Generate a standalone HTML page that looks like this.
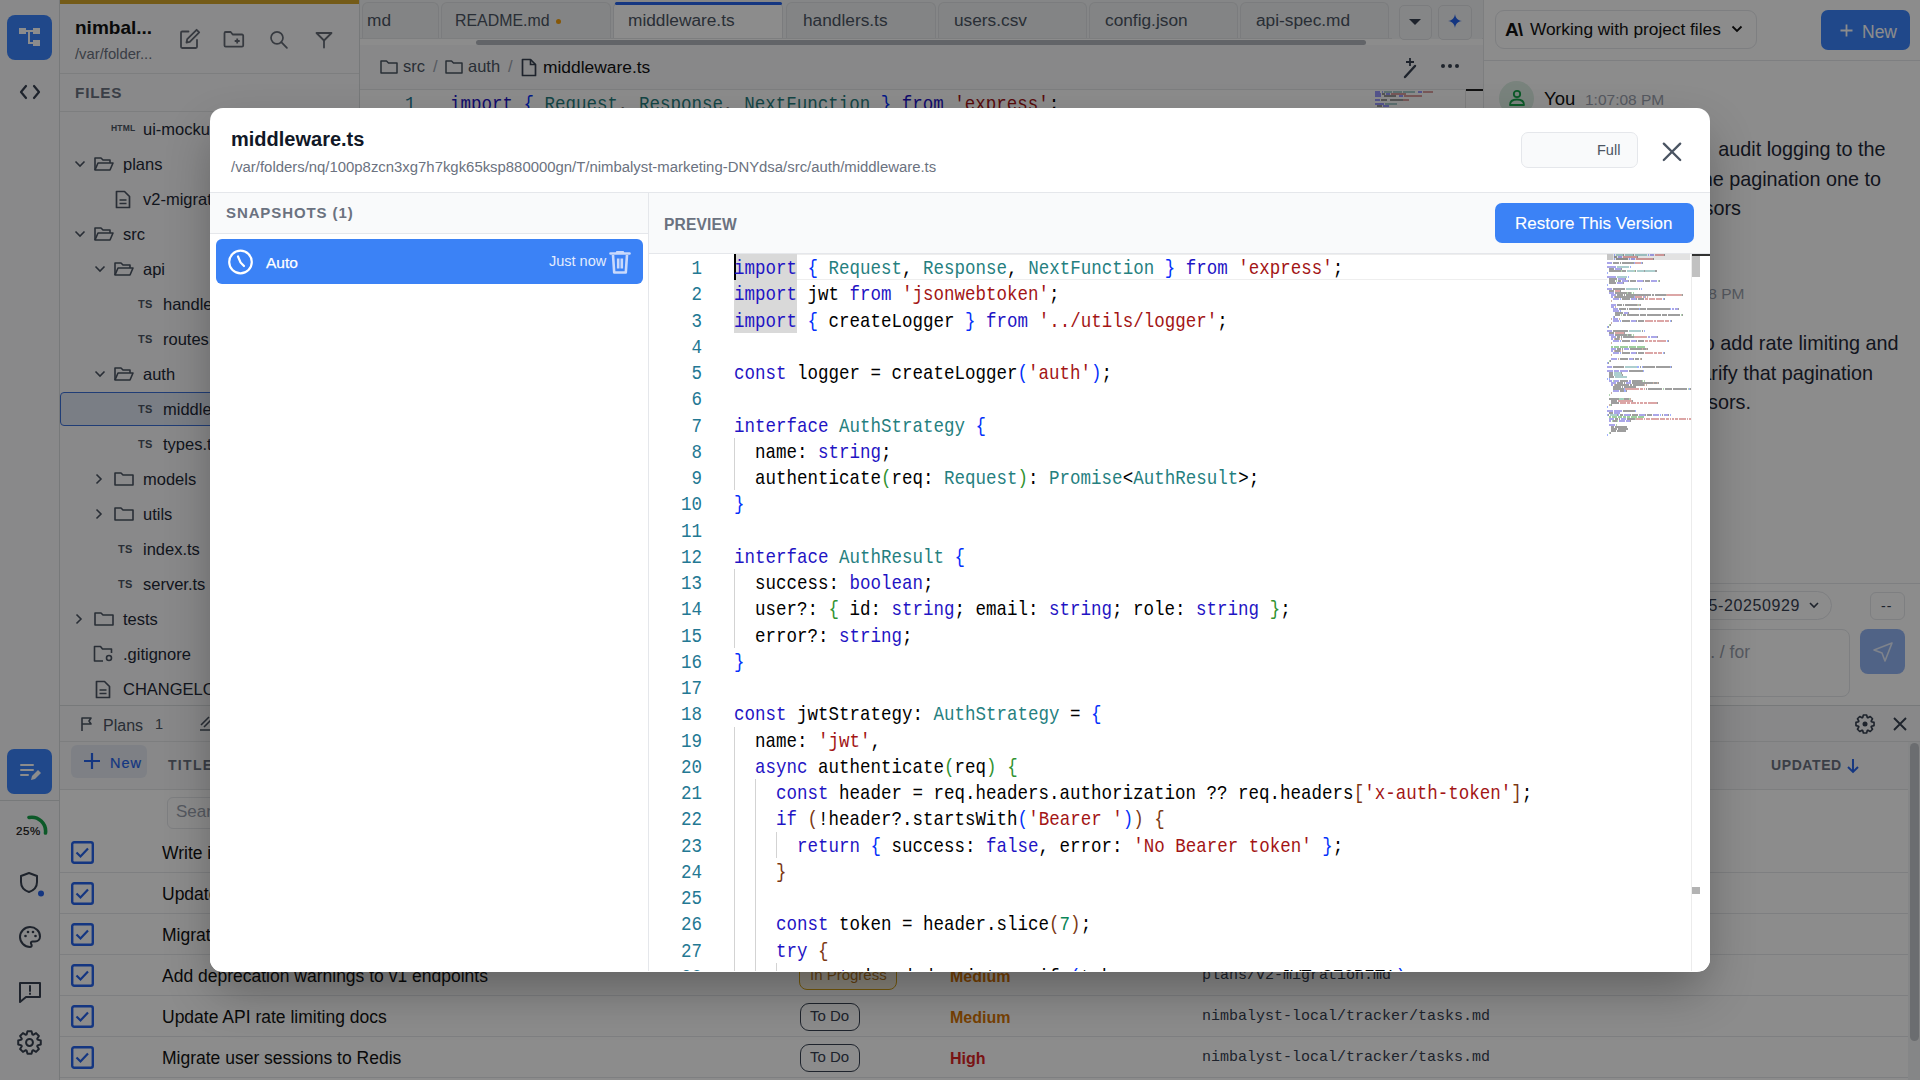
<!DOCTYPE html>
<html><head><meta charset="utf-8"><style>
*{margin:0;padding:0}
html,body{width:1920px;height:1080px;overflow:hidden;background:#fff}
.abs{position:absolute}
.txt{font-family:"Liberation Sans",sans-serif;line-height:1.2;white-space:nowrap}
.mono{font-family:"Liberation Mono",monospace;line-height:1.2;white-space:pre}
.ln{left:0;width:53px;text-align:right;font-size:17.5px;line-height:26.25px;color:#237893;transform:scaleY(1.15);transform-origin:0 17px}
.cl{font-size:17.5px;line-height:26.25px;color:#000;transform:scaleY(1.15);transform-origin:0 17px}
.mm{font-size:10px;line-height:12.6px;transform:scale(0.1667);transform-origin:0 0;font-weight:bold;color:#000}
</style></head>
<body>
<div class="abs" style="left:0;top:0;width:59px;height:1080px;background:#fafafb;border-right:1px solid #d9dcdf"></div>
<div class="abs" style="left:7px;top:15px;width:45px;height:45px;border-radius:8px;background:#3b84fc"></div>
<svg class="abs" style="left:17px;top:25px" width="26" height="26" viewBox="0 0 26 26"><rect x="2" y="3" width="7" height="6" fill="#fff"/><rect x="16" y="3" width="7" height="6" fill="#fff"/><rect x="16" y="15" width="7" height="6" fill="#fff"/><path d="M9 6h7M12 6v12h4" stroke="#fff" stroke-width="2" fill="none"/></svg>
<svg class="abs" style="left:19px;top:83px" width="22" height="18" viewBox="0 0 22 18"><path d="M7 3L2 9l5 6M15 3l5 6-5 6" stroke="#374151" stroke-width="2.2" fill="none" stroke-linecap="round" stroke-linejoin="round"/></svg>
<div class="abs" style="left:7px;top:749px;width:45px;height:45px;border-radius:7px;background:#3b84fc"></div>
<svg class="abs" style="left:18px;top:760px" width="24" height="24" viewBox="0 0 24 24"><path d="M3 5h12M3 10h12M3 15h7" stroke="#fff" stroke-width="2" stroke-linecap="round"/><path d="M13 20l1-4 6-6 3 3-6 6z" fill="#fff"/></svg>
<div class="abs" style="left:0;top:800px;width:59px;height:1px;background:#d9dcdf"></div>
<svg class="abs" style="left:14px;top:813px" width="34" height="30" viewBox="0 0 34 30"><path d="M15 4.5 A14 14 0 0 1 31.5 20" stroke="#16a34a" stroke-width="3.6" fill="none" stroke-linecap="round"/></svg>
<div class="abs txt" style="left:16px;top:825px;font-size:11.5px;color:#111;letter-spacing:0.6px;-webkit-text-stroke:0.2px #111">25%</div>
<svg class="abs" style="left:18px;top:871px" width="26" height="26" viewBox="0 0 26 26"><path d="M11 2l8 3v6c0 5-3.5 8.5-8 10-4.5-1.5-8-5-8-10V5z" stroke="#374151" stroke-width="2" fill="none" stroke-linejoin="round"/><circle cx="23" cy="22.5" r="3" fill="#2563eb"/></svg>
<svg class="abs" style="left:18px;top:925px" width="24" height="24" viewBox="0 0 24 24"><path d="M12 2C6.5 2 2 6.5 2 12s4.5 10 10 10c1 0 1.7-.8 1.7-1.7 0-.4-.2-.8-.4-1.1-.3-.3-.4-.7-.4-1.1 0-.9.8-1.7 1.7-1.7H17c3 0 5-2.2 5-5C22 6 17.5 2 12 2z" stroke="#374151" stroke-width="2" fill="none"/><circle cx="7.5" cy="11" r="1.3" fill="#374151"/><circle cx="10" cy="7" r="1.3" fill="#374151"/><circle cx="15" cy="7" r="1.3" fill="#374151"/><circle cx="17.5" cy="11" r="1.3" fill="#374151"/></svg>
<svg class="abs" style="left:18px;top:980px" width="24" height="24" viewBox="0 0 24 24"><path d="M2 3h20v14H8l-6 5z" stroke="#374151" stroke-width="2" fill="none" stroke-linejoin="round"/><path d="M12 6v5M12 13.5v.5" stroke="#374151" stroke-width="2" stroke-linecap="round"/></svg>
<svg class="abs" style="left:17px;top:1030px" width="25" height="25" viewBox="0 0 24 24"><path d="M19.72 9.22 L22.83 10.07 L22.83 13.93 L19.72 14.78 L19.42 15.49 L21.02 18.29 L18.29 21.02 L15.49 19.42 L14.78 19.72 L13.93 22.83 L10.07 22.83 L9.22 19.72 L8.51 19.42 L5.71 21.02 L2.98 18.29 L4.58 15.49 L4.28 14.78 L1.17 13.93 L1.17 10.07 L4.28 9.22 L4.58 8.51 L2.98 5.71 L5.71 2.98 L8.51 4.58 L9.22 4.28 L10.07 1.17 L13.93 1.17 L14.78 4.28 L15.49 4.58 L18.29 2.98 L21.02 5.71 L19.42 8.51Z" stroke="#374151" stroke-width="1.9" fill="none" stroke-linejoin="round"/><circle cx="12" cy="12" r="3.3" stroke="#374151" stroke-width="1.9" fill="none"/></svg>
<div class="abs" style="left:60px;top:0;width:299px;height:705px;background:#fafafb;border-right:1px solid #d9dcdf"></div>
<div class="abs" style="left:60px;top:0;width:299px;height:4px;background:#d4a72c"></div>
<div class="abs txt" style="left:75px;top:16.5px;font-size:19px;font-weight:bold;color:#111">nimbal...</div>
<div class="abs txt" style="left:75px;top:45.5px;font-size:14.8px;color:#6b7280">/var/folder...</div>
<svg class="abs" style="left:179px;top:28px" width="22" height="22" viewBox="0 0 22 22"><path d="M9.5 3.5H3.2a1.2 1.2 0 0 0-1.2 1.2v14.1a1.2 1.2 0 0 0 1.2 1.2h13.6a1.2 1.2 0 0 0 1.2-1.2V12" stroke="#646b76" stroke-width="1.8" fill="none" stroke-linecap="round"/><path d="M17.6 1.8l2.6 2.6-9.4 9.4-3.3.7.7-3.3z" stroke="#646b76" stroke-width="1.8" fill="none" stroke-linejoin="round"/></svg>
<svg class="abs" style="left:223px;top:30px" width="22" height="18" viewBox="0 0 22 18"><path d="M1.5 3.2a1.2 1.2 0 0 1 1.2-1.2h5l2 2.5h9.3a1.2 1.2 0 0 1 1.2 1.2v9.8a1.2 1.2 0 0 1-1.2 1.2H2.7a1.2 1.2 0 0 1-1.2-1.2z" stroke="#646b76" stroke-width="1.8" fill="none" stroke-linejoin="round"/><path d="M14.2 8.5v5M11.7 11h5" stroke="#646b76" stroke-width="1.8"/></svg>
<svg class="abs" style="left:269px;top:30px" width="20" height="20" viewBox="0 0 20 20"><circle cx="8" cy="7.8" r="6" stroke="#646b76" stroke-width="1.7" fill="none"/><path d="M12.3 12.2l5.6 5.6" stroke="#646b76" stroke-width="1.8" stroke-linecap="round"/></svg>
<svg class="abs" style="left:315px;top:31px" width="18" height="18" viewBox="0 0 18 18"><path d="M1.5 2h15L9 9.5z" stroke="#646b76" stroke-width="1.8" fill="none" stroke-linejoin="round"/><path d="M9 9.5v7" stroke="#646b76" stroke-width="1.8" stroke-linecap="round"/></svg>
<div class="abs" style="left:60px;top:73px;width:299px;height:1px;background:#e3e5e8"></div>
<div class="abs" style="left:60px;top:111px;width:299px;height:1px;background:#e3e5e8"></div>
<div class="abs txt" style="left:75px;top:84px;font-size:15.3px;font-weight:bold;color:#6b7280;letter-spacing:0.8px">FILES</div>
<div class="abs" style="left:60px;top:392px;width:298px;height:34px;border:1px solid #3b6fd8;border-radius:4px;background:#dfe6f3;box-sizing:border-box"></div>
<div class="abs txt" style="left:143px;top:120px;font-size:16.5px;color:#1f2937;white-space:nowrap">ui-mockup.html</div>
<div class="abs txt" style="left:111px;top:123px;font-size:8.5px;font-weight:bold;color:#4b5563;letter-spacing:0.2px">HTML</div>
<div class="abs txt" style="left:123px;top:155px;font-size:16.5px;color:#1f2937;white-space:nowrap">plans</div>
<svg class="abs" style="left:74px;top:160px" width="12" height="8" viewBox="0 0 12 8"><path d="M1.5 1.5l4.5 4.5 4.5-4.5" stroke="#4b5563" stroke-width="1.6" fill="none"/></svg>
<svg class="abs" style="left:94px;top:156px" width="20" height="16" viewBox="0 0 20 16"><path d="M1 14V2h6l2 2h7v3" stroke="#4b5563" stroke-width="1.6" fill="none" stroke-linejoin="round"/><path d="M1 14l3-7h15l-3 7z" stroke="#4b5563" stroke-width="1.6" fill="none" stroke-linejoin="round"/></svg>
<div class="abs txt" style="left:143px;top:190px;font-size:16.5px;color:#1f2937;white-space:nowrap">v2-migration.md</div>
<svg class="abs" style="left:115px;top:190px" width="16" height="19" viewBox="0 0 16 19"><path d="M1.5 1.5h8l5 5v11h-13z" stroke="#4b5563" stroke-width="1.7" fill="none" stroke-linejoin="round"/><path d="M4.5 10h7M4.5 13.5h7" stroke="#4b5563" stroke-width="1.6"/></svg>
<div class="abs txt" style="left:123px;top:225px;font-size:16.5px;color:#1f2937;white-space:nowrap">src</div>
<svg class="abs" style="left:74px;top:230px" width="12" height="8" viewBox="0 0 12 8"><path d="M1.5 1.5l4.5 4.5 4.5-4.5" stroke="#4b5563" stroke-width="1.6" fill="none"/></svg>
<svg class="abs" style="left:94px;top:226px" width="20" height="16" viewBox="0 0 20 16"><path d="M1 14V2h6l2 2h7v3" stroke="#4b5563" stroke-width="1.6" fill="none" stroke-linejoin="round"/><path d="M1 14l3-7h15l-3 7z" stroke="#4b5563" stroke-width="1.6" fill="none" stroke-linejoin="round"/></svg>
<div class="abs txt" style="left:143px;top:260px;font-size:16.5px;color:#1f2937;white-space:nowrap">api</div>
<svg class="abs" style="left:94px;top:265px" width="12" height="8" viewBox="0 0 12 8"><path d="M1.5 1.5l4.5 4.5 4.5-4.5" stroke="#4b5563" stroke-width="1.6" fill="none"/></svg>
<svg class="abs" style="left:114px;top:261px" width="20" height="16" viewBox="0 0 20 16"><path d="M1 14V2h6l2 2h7v3" stroke="#4b5563" stroke-width="1.6" fill="none" stroke-linejoin="round"/><path d="M1 14l3-7h15l-3 7z" stroke="#4b5563" stroke-width="1.6" fill="none" stroke-linejoin="round"/></svg>
<div class="abs txt" style="left:163px;top:295px;font-size:16.5px;color:#1f2937;white-space:nowrap">handlers.ts</div>
<div class="abs txt" style="left:138px;top:298px;font-size:11px;font-weight:bold;color:#4b5563;letter-spacing:0.3px">TS</div>
<div class="abs txt" style="left:163px;top:330px;font-size:16.5px;color:#1f2937;white-space:nowrap">routes.ts</div>
<div class="abs txt" style="left:138px;top:333px;font-size:11px;font-weight:bold;color:#4b5563;letter-spacing:0.3px">TS</div>
<div class="abs txt" style="left:143px;top:365px;font-size:16.5px;color:#1f2937;white-space:nowrap">auth</div>
<svg class="abs" style="left:94px;top:370px" width="12" height="8" viewBox="0 0 12 8"><path d="M1.5 1.5l4.5 4.5 4.5-4.5" stroke="#4b5563" stroke-width="1.6" fill="none"/></svg>
<svg class="abs" style="left:114px;top:366px" width="20" height="16" viewBox="0 0 20 16"><path d="M1 14V2h6l2 2h7v3" stroke="#4b5563" stroke-width="1.6" fill="none" stroke-linejoin="round"/><path d="M1 14l3-7h15l-3 7z" stroke="#4b5563" stroke-width="1.6" fill="none" stroke-linejoin="round"/></svg>
<div class="abs txt" style="left:163px;top:400px;font-size:16.5px;color:#1f2937;white-space:nowrap">middleware.ts</div>
<div class="abs txt" style="left:138px;top:403px;font-size:11px;font-weight:bold;color:#4b5563;letter-spacing:0.3px">TS</div>
<div class="abs txt" style="left:163px;top:435px;font-size:16.5px;color:#1f2937;white-space:nowrap">types.ts</div>
<div class="abs txt" style="left:138px;top:438px;font-size:11px;font-weight:bold;color:#4b5563;letter-spacing:0.3px">TS</div>
<div class="abs txt" style="left:143px;top:470px;font-size:16.5px;color:#1f2937;white-space:nowrap">models</div>
<svg class="abs" style="left:95px;top:473px" width="8" height="12" viewBox="0 0 8 12"><path d="M1.5 1.5l4.5 4.5-4.5 4.5" stroke="#4b5563" stroke-width="1.6" fill="none"/></svg>
<svg class="abs" style="left:114px;top:471px" width="20" height="16" viewBox="0 0 20 16"><path d="M1 14V2h6l2 2h10v10z" stroke="#4b5563" stroke-width="1.6" fill="none" stroke-linejoin="round"/></svg>
<div class="abs txt" style="left:143px;top:505px;font-size:16.5px;color:#1f2937;white-space:nowrap">utils</div>
<svg class="abs" style="left:95px;top:508px" width="8" height="12" viewBox="0 0 8 12"><path d="M1.5 1.5l4.5 4.5-4.5 4.5" stroke="#4b5563" stroke-width="1.6" fill="none"/></svg>
<svg class="abs" style="left:114px;top:506px" width="20" height="16" viewBox="0 0 20 16"><path d="M1 14V2h6l2 2h10v10z" stroke="#4b5563" stroke-width="1.6" fill="none" stroke-linejoin="round"/></svg>
<div class="abs txt" style="left:143px;top:540px;font-size:16.5px;color:#1f2937;white-space:nowrap">index.ts</div>
<div class="abs txt" style="left:118px;top:543px;font-size:11px;font-weight:bold;color:#4b5563;letter-spacing:0.3px">TS</div>
<div class="abs txt" style="left:143px;top:575px;font-size:16.5px;color:#1f2937;white-space:nowrap">server.ts</div>
<div class="abs txt" style="left:118px;top:578px;font-size:11px;font-weight:bold;color:#4b5563;letter-spacing:0.3px">TS</div>
<div class="abs txt" style="left:123px;top:610px;font-size:16.5px;color:#1f2937;white-space:nowrap">tests</div>
<svg class="abs" style="left:75px;top:613px" width="8" height="12" viewBox="0 0 8 12"><path d="M1.5 1.5l4.5 4.5-4.5 4.5" stroke="#4b5563" stroke-width="1.6" fill="none"/></svg>
<svg class="abs" style="left:94px;top:611px" width="20" height="16" viewBox="0 0 20 16"><path d="M1 14V2h6l2 2h10v10z" stroke="#4b5563" stroke-width="1.6" fill="none" stroke-linejoin="round"/></svg>
<div class="abs txt" style="left:123px;top:645px;font-size:16.5px;color:#1f2937;white-space:nowrap">.gitignore</div>
<svg class="abs" style="left:93px;top:645px" width="22" height="18" viewBox="0 0 22 18"><path d="M10 16H1.5V1.5h6l2 2.5h9v4" stroke="#4b5563" stroke-width="1.6" fill="none" stroke-linejoin="round"/><circle cx="16" cy="13" r="2.5" stroke="#4b5563" stroke-width="1.6" fill="none"/></svg>
<div class="abs txt" style="left:123px;top:680px;font-size:16.5px;color:#1f2937;white-space:nowrap">CHANGELOG.md</div>
<svg class="abs" style="left:95px;top:680px" width="16" height="19" viewBox="0 0 16 19"><path d="M1.5 1.5h8l5 5v11h-13z" stroke="#4b5563" stroke-width="1.7" fill="none" stroke-linejoin="round"/><path d="M4.5 10h7M4.5 13.5h7" stroke="#4b5563" stroke-width="1.6"/></svg>
<div class="abs" style="left:360px;top:0;width:1123px;height:705px;background:#ffffff"></div>
<div class="abs" style="left:360px;top:0;width:1123px;height:38px;background:#f3f4f6;border-bottom:1px solid #e3e5e8"></div>
<div class="abs" style="left:362px;top:2px;width:77px;height:36px;background:#eef0f2;border-radius:6px 6px 0 0;border:1px solid #e0e2e5;border-bottom:none;box-sizing:border-box"></div>
<div class="abs txt" style="left:367px;top:10px;font-size:17.3px;color:#4b5563;white-space:nowrap">md</div>
<div class="abs" style="left:441px;top:2px;width:170px;height:36px;background:#eef0f2;border-radius:6px 6px 0 0;border:1px solid #e0e2e5;border-bottom:none;box-sizing:border-box"></div>
<div class="abs txt" style="left:455px;top:11px;font-size:15.9px;color:#4b5563;white-space:nowrap">README.md</div>
<div class="abs" style="left:613px;top:2px;width:170px;height:36px;background:#ffffff;border-radius:6px 6px 0 0;border:1px solid #e0e2e5;border-bottom:none;box-sizing:border-box"></div>
<div class="abs txt" style="left:628px;top:10px;font-size:17.3px;color:#4b5563;white-space:nowrap">middleware.ts</div>
<div class="abs" style="left:786px;top:2px;width:150px;height:36px;background:#eef0f2;border-radius:6px 6px 0 0;border:1px solid #e0e2e5;border-bottom:none;box-sizing:border-box"></div>
<div class="abs txt" style="left:803px;top:10px;font-size:17.3px;color:#4b5563;white-space:nowrap">handlers.ts</div>
<div class="abs" style="left:938px;top:2px;width:149px;height:36px;background:#eef0f2;border-radius:6px 6px 0 0;border:1px solid #e0e2e5;border-bottom:none;box-sizing:border-box"></div>
<div class="abs txt" style="left:954px;top:10px;font-size:17.3px;color:#4b5563;white-space:nowrap">users.csv</div>
<div class="abs" style="left:1089px;top:2px;width:149px;height:36px;background:#eef0f2;border-radius:6px 6px 0 0;border:1px solid #e0e2e5;border-bottom:none;box-sizing:border-box"></div>
<div class="abs txt" style="left:1105px;top:10px;font-size:17.3px;color:#4b5563;white-space:nowrap">config.json</div>
<div class="abs" style="left:1240px;top:2px;width:149px;height:36px;background:#eef0f2;border-radius:6px 6px 0 0;border:1px solid #e0e2e5;border-bottom:none;box-sizing:border-box"></div>
<div class="abs txt" style="left:1256px;top:10px;font-size:17.3px;color:#4b5563;white-space:nowrap">api-spec.md</div>
<div class="abs" style="left:615px;top:2px;width:167px;height:3px;border-radius:2px;background:#2563eb"></div>
<div class="abs" style="left:556px;top:19px;width:5px;height:5px;border-radius:3px;background:#f59e0b"></div>
<div class="abs" style="left:1392px;top:3px;width:90px;height:36px;background:#f3f4f6"></div>
<div class="abs" style="left:1399px;top:5px;width:33px;height:35px;border:1px solid #e0e2e5;border-radius:5px;box-sizing:border-box;background:#f3f4f6"></div>
<svg class="abs" style="left:1408px;top:17px" width="14" height="10" viewBox="0 0 14 10"><path d="M1 2h12L7 8z" fill="#374151"/></svg>
<div class="abs" style="left:1438px;top:5px;width:34px;height:35px;border:1px solid #e0e2e5;border-radius:5px;box-sizing:border-box;background:#f3f4f6"></div>
<svg class="abs" style="left:1444px;top:12px" width="22" height="22" viewBox="0 0 22 22"><path d="M11 2c.6 4 2.5 6.2 7 7-4.5.8-6.4 3-7 7-.6-4-2.5-6.2-7-7 4.5-.8 6.4-3 7-7z" fill="#2563eb"/></svg>
<div class="abs" style="left:476px;top:40px;width:890px;height:5px;border-radius:3px;background:#b3b7bd"></div>
<div class="abs" style="left:360px;top:45px;width:1123px;height:44px;background:#f7f8f9;border-bottom:1px solid #e3e5e8"></div>
<svg class="abs" style="left:380px;top:59px" width="18" height="16" viewBox="0 0 18 16"><path d="M1 14V2h5.5l2 2H17v10z" stroke="#4b5563" stroke-width="1.5" fill="none" stroke-linejoin="round"/></svg>
<div class="abs txt" style="left:403px;top:57px;font-size:16.5px;color:#4b5563">src</div>
<div class="abs txt" style="left:433px;top:57px;font-size:16.5px;color:#9ca3af">/</div>
<svg class="abs" style="left:445px;top:59px" width="18" height="16" viewBox="0 0 18 16"><path d="M1 14V2h5.5l2 2H17v10z" stroke="#4b5563" stroke-width="1.5" fill="none" stroke-linejoin="round"/></svg>
<div class="abs txt" style="left:468px;top:57px;font-size:16.5px;color:#4b5563">auth</div>
<div class="abs txt" style="left:508px;top:57px;font-size:16.5px;color:#9ca3af">/</div>
<svg class="abs" style="left:521px;top:58px" width="16" height="19" viewBox="0 0 16 19"><path d="M1.5 1.5h8l5 5v11h-13z" stroke="#374151" stroke-width="1.7" fill="none" stroke-linejoin="round"/><path d="M9.5 1.5v5h5" stroke="#374151" stroke-width="1.6" fill="none"/></svg>
<div class="abs txt" style="left:543px;top:56.5px;font-size:17.4px;color:#111">middleware.ts</div>
<svg class="abs" style="left:1401px;top:57px" width="20" height="22" viewBox="0 0 20 22"><path d="M9 1v8M5 5h8" stroke="#374151" stroke-width="1.8"/><path d="M14 9L4 20" stroke="#374151" stroke-width="2.4" stroke-linecap="round"/></svg>
<svg class="abs" style="left:1440px;top:63px" width="20" height="6" viewBox="0 0 20 6"><circle cx="3" cy="3" r="2" fill="#374151"/><circle cx="10" cy="3" r="2" fill="#374151"/><circle cx="17" cy="3" r="2" fill="#374151"/></svg>
<div class="abs mono cl" style="left:405px;top:92px;color:#237893">1</div>
<div class="abs mono cl" style="left:450px;top:92px"><span style="color:#1f14c4">import</span> <span style="color:#0431fa">{</span> <span style="color:#267f7f">Request</span>, <span style="color:#267f7f">Response</span>, <span style="color:#267f7f">NextFunction</span> <span style="color:#0431fa">}</span> <span style="color:#1f14c4">from</span> <span style="color:#a31515">'express'</span>;</div>
<div class="abs" style="left:1466px;top:89px;width:17px;height:2px;background:#222"></div>
<div class="abs" style="left:1465px;top:90px;width:1px;height:18px;background:#e5e5e5"></div>
<svg class="abs" style="left:1375px;top:91px" width="70" height="17"><g fill-opacity="0.4"><rect x="0" y="0" width="5" height="2" fill="#0000ff"/><rect x="7" y="0" width="1" height="2" fill="#0431fa"/><rect x="9" y="0" width="8" height="2" fill="#267f7f"/><rect x="18" y="0" width="9" height="2" fill="#267f7f"/><rect x="28" y="0" width="12" height="2" fill="#267f7f"/><rect x="43" y="0" width="4" height="2" fill="#0000ff"/><rect x="48" y="0" width="10" height="2" fill="#a31515"/><rect x="0" y="2" width="6" height="2" fill="#0000ff"/><rect x="7" y="2" width="3" height="2" fill="#000"/><rect x="11" y="2" width="4" height="2" fill="#0000ff"/><rect x="16" y="2" width="15" height="2" fill="#a31515"/><rect x="0" y="4" width="6" height="2" fill="#0000ff"/><rect x="9" y="4" width="12" height="2" fill="#000"/><rect x="24" y="4" width="4" height="2" fill="#0000ff"/><rect x="29" y="4" width="18" height="2" fill="#a31515"/><rect x="0" y="8" width="5" height="2" fill="#0000ff"/><rect x="6" y="8" width="6" height="2" fill="#000"/><rect x="15" y="8" width="13" height="2" fill="#000"/><rect x="28" y="8" width="6" height="2" fill="#a31515"/><rect x="0" y="12" width="9" height="2" fill="#0000ff"/><rect x="10" y="12" width="12" height="2" fill="#267f7f"/><rect x="2" y="14" width="5" height="2" fill="#000"/><rect x="8" y="14" width="6" height="2" fill="#0000ff"/></g></svg>
<div class="abs" style="left:1483px;top:0;width:437px;height:705px;background:#ffffff;border-left:1px solid #e3e5e8;box-sizing:border-box"></div>
<div class="abs" style="left:1495px;top:10px;width:262px;height:39px;border:1px solid #e5e7eb;border-radius:9px;box-sizing:border-box"></div>
<div class="abs txt" style="left:1505px;top:19px;font-size:19px;font-weight:bold;color:#111;letter-spacing:-1px">A\</div>
<div class="abs txt" style="left:1530px;top:19px;font-size:17.3px;color:#111">Working with project files</div>
<svg class="abs" style="left:1731px;top:25px" width="12" height="8" viewBox="0 0 12 8"><path d="M1.5 1.5l4.5 4.5 4.5-4.5" stroke="#111" stroke-width="1.8" fill="none"/></svg>
<div class="abs" style="left:1821px;top:10px;width:89px;height:40px;border-radius:7px;background:#3b84fc"></div>
<svg class="abs" style="left:1840px;top:24px" width="13" height="13" viewBox="0 0 13 13"><path d="M6.5 0.5v12M0.5 6.5h12" stroke="#fff" stroke-width="1.8"/></svg>
<div class="abs txt" style="left:1862px;top:21.5px;font-size:17.5px;color:#fff">New</div>
<div class="abs" style="left:1484px;top:60px;width:436px;height:1px;background:#e5e7eb"></div>
<div class="abs" style="left:1499px;top:81px;width:35px;height:35px;border-radius:18px;background:#dcefe3"></div>
<svg class="abs" style="left:1507px;top:88px" width="20" height="20" viewBox="0 0 20 20"><circle cx="10" cy="6" r="3.2" stroke="#16a34a" stroke-width="1.8" fill="none"/><path d="M3 17c0-4 3-5.5 7-5.5s7 1.5 7 5.5z" stroke="#16a34a" stroke-width="1.8" fill="none" stroke-linejoin="round"/></svg>
<div class="abs txt" style="left:1544px;top:88px;font-size:18.5px;color:#111">You</div>
<div class="abs txt" style="left:1585px;top:91px;font-size:15.5px;color:#9ca3af">1:07:08 PM</div>
<div class="abs txt" style="right:34.5px;top:137.6px;font-size:19.8px;line-height:23.76px;color:#1f2937;text-align:right">audit logging to the</div>
<div class="abs txt" style="right:39px;top:167.6px;font-size:19.8px;line-height:23.76px;color:#1f2937;text-align:right">endpoints and the pagination one to</div>
<div class="abs txt" style="right:179px;top:197.1px;font-size:19.8px;line-height:23.76px;color:#1f2937;text-align:right">use cursors</div>
<div class="abs txt" style="right:175.5px;top:284.9px;font-size:15.5px;line-height:18.60px;color:#9ca3af;text-align:right">1:07:38 PM</div>
<div class="abs txt" style="right:21.5px;top:331.6px;font-size:19.8px;line-height:23.76px;color:#1f2937;text-align:right">Also, I need to add rate limiting and</div>
<div class="abs txt" style="right:47px;top:361.6px;font-size:19.8px;line-height:23.76px;color:#1f2937;text-align:right">docs, and clarify that pagination</div>
<div class="abs txt" style="right:169px;top:390.6px;font-size:19.8px;line-height:23.76px;color:#1f2937;text-align:right">uses cursors.</div>
<div class="abs" style="left:1484px;top:583px;width:436px;height:1px;background:#e5e7eb"></div>
<div class="abs" style="left:1560px;top:591px;width:272px;height:29px;border:1px solid #e5e7eb;border-radius:15px;box-sizing:border-box"></div>
<div class="abs txt" style="right:120px;top:596px;font-size:16px;color:#374151;letter-spacing:0.6px">claude-sonnet-4-5-20250929</div>
<svg class="abs" style="left:1809px;top:602px" width="10" height="7" viewBox="0 0 10 7"><path d="M1 1l4 4 4-4" stroke="#374151" stroke-width="1.6" fill="none"/></svg>
<div class="abs" style="left:1870px;top:592px;width:35px;height:28px;border:1px solid #e5e7eb;border-radius:6px;box-sizing:border-box"></div>
<div class="abs txt" style="left:1881px;top:598px;font-size:14px;color:#374151;letter-spacing:1px">--</div>
<div class="abs" style="left:1560px;top:629px;width:290px;height:68px;border:1px solid #e5e7eb;border-radius:8px;box-sizing:border-box"></div>
<div class="abs txt" style="right:170px;top:642px;font-size:17.5px;color:#9ca3af">Ask anything... / for</div>
<div class="abs" style="left:1860px;top:629px;width:45px;height:45px;border-radius:8px;background:#93b4f5"></div>
<svg class="abs" style="left:1872px;top:641px" width="22" height="22" viewBox="0 0 22 22"><path d="M20 2L2 9l8 3 3 8z" stroke="#e5eefe" stroke-width="1.6" fill="none" stroke-linejoin="round"/></svg>
<div class="abs" style="left:60px;top:705px;width:1860px;height:375px;background:#ffffff;border-top:1px solid #d9dcdf;box-sizing:border-box"></div>
<div class="abs" style="left:60px;top:706px;width:1860px;height:35px;background:#f7f8f9;border-bottom:1px solid #e3e5e8"></div>
<svg class="abs" style="left:80px;top:716px" width="14" height="16" viewBox="0 0 14 16"><path d="M2 15V2h9l-2 3 2 3H2" stroke="#4b5563" stroke-width="1.6" fill="none" stroke-linejoin="round"/></svg>
<div class="abs txt" style="left:103px;top:715.5px;font-size:16px;color:#4b5563">Plans</div>
<div class="abs txt" style="left:155px;top:716px;font-size:14.5px;color:#4b5563">1</div>
<svg class="abs" style="left:198px;top:715px" width="16" height="16" viewBox="0 0 16 16"><path d="M3 10l8-8M6 12l8-8M2 15h12" stroke="#4b5563" stroke-width="1.6"/></svg>
<svg class="abs" style="left:1855px;top:714px" width="20" height="20" viewBox="0 0 24 24"><path d="M19.72 9.22 L22.83 10.07 L22.83 13.93 L19.72 14.78 L19.42 15.49 L21.02 18.29 L18.29 21.02 L15.49 19.42 L14.78 19.72 L13.93 22.83 L10.07 22.83 L9.22 19.72 L8.51 19.42 L5.71 21.02 L2.98 18.29 L4.58 15.49 L4.28 14.78 L1.17 13.93 L1.17 10.07 L4.28 9.22 L4.58 8.51 L2.98 5.71 L5.71 2.98 L8.51 4.58 L9.22 4.28 L10.07 1.17 L13.93 1.17 L14.78 4.28 L15.49 4.58 L18.29 2.98 L21.02 5.71 L19.42 8.51Z" stroke="#374151" stroke-width="2" fill="none" stroke-linejoin="round"/><circle cx="12" cy="12" r="3" fill="#374151"/></svg>
<svg class="abs" style="left:1892px;top:716px" width="16" height="16" viewBox="0 0 16 16"><path d="M2 2l12 12M14 2L2 14" stroke="#374151" stroke-width="1.9"/></svg>
<div class="abs" style="left:60px;top:742px;width:1848px;height:47px;background:#f7f8f9;border-bottom:1px solid #e3e5e8"></div>
<div class="abs" style="left:71px;top:745px;width:76px;height:33px;border-radius:6px;background:#e5eaf3"></div>
<svg class="abs" style="left:83px;top:752px" width="18" height="18" viewBox="0 0 18 18"><path d="M9 1v16M1 9h16" stroke="#2563eb" stroke-width="2.2"/></svg>
<div class="abs txt" style="left:110px;top:755px;font-size:14.5px;color:#2563eb;letter-spacing:1px;-webkit-text-stroke:0.2px #2563eb">New</div>
<div class="abs txt" style="left:168px;top:757px;font-size:14px;font-weight:bold;color:#6b7280;letter-spacing:1.3px">TITLE</div>
<div class="abs txt" style="left:1771px;top:757px;font-size:14px;font-weight:bold;color:#6b7280;letter-spacing:0.6px">UPDATED</div>
<svg class="abs" style="left:1846px;top:758px" width="14" height="16" viewBox="0 0 14 16"><path d="M7 1v13M2 9l5 5 5-5" stroke="#2563eb" stroke-width="1.9" fill="none"/></svg>
<div class="abs" style="left:167px;top:797px;width:300px;height:32px;border:1px solid #e5e7eb;border-radius:6px;box-sizing:border-box"></div>
<div class="abs txt" style="left:176px;top:802px;font-size:17px;color:#9ca3af">Search...</div>
<div class="abs" style="left:1908px;top:742px;width:12px;height:338px;background:#f3f4f6"></div>
<div class="abs" style="left:1910px;top:743px;width:9px;height:298px;border-radius:5px;background:#c4c7cc"></div>
<div class="abs" style="left:60px;top:872px;width:1848px;height:1px;background:#e5e7eb"></div>
<svg class="abs" style="left:71px;top:841px" width="23" height="23" viewBox="0 0 23 23"><rect x="1.2" y="1.2" width="20.6" height="20.6" rx="2" stroke="#2563eb" stroke-width="2.4" fill="#fff"/><path d="M5.5 11.5l4 4 7.5-8" stroke="#2563eb" stroke-width="2.2" fill="none"/></svg>
<div class="abs txt" style="left:162px;top:842.5px;font-size:17.5px;color:#111;white-space:nowrap">Write integration tests for auth</div>
<div class="abs" style="left:60px;top:913px;width:1848px;height:1px;background:#e5e7eb"></div>
<svg class="abs" style="left:71px;top:882px" width="23" height="23" viewBox="0 0 23 23"><rect x="1.2" y="1.2" width="20.6" height="20.6" rx="2" stroke="#2563eb" stroke-width="2.4" fill="#fff"/><path d="M5.5 11.5l4 4 7.5-8" stroke="#2563eb" stroke-width="2.2" fill="none"/></svg>
<div class="abs txt" style="left:162px;top:883.5px;font-size:17.5px;color:#111;white-space:nowrap">Update OpenAPI spec for v2</div>
<div class="abs" style="left:60px;top:954px;width:1848px;height:1px;background:#e5e7eb"></div>
<svg class="abs" style="left:71px;top:923px" width="23" height="23" viewBox="0 0 23 23"><rect x="1.2" y="1.2" width="20.6" height="20.6" rx="2" stroke="#2563eb" stroke-width="2.4" fill="#fff"/><path d="M5.5 11.5l4 4 7.5-8" stroke="#2563eb" stroke-width="2.2" fill="none"/></svg>
<div class="abs txt" style="left:162px;top:924.5px;font-size:17.5px;color:#111;white-space:nowrap">Migrate database schema</div>
<div class="abs" style="left:60px;top:995px;width:1848px;height:1px;background:#e5e7eb"></div>
<svg class="abs" style="left:71px;top:964px" width="23" height="23" viewBox="0 0 23 23"><rect x="1.2" y="1.2" width="20.6" height="20.6" rx="2" stroke="#2563eb" stroke-width="2.4" fill="#fff"/><path d="M5.5 11.5l4 4 7.5-8" stroke="#2563eb" stroke-width="2.2" fill="none"/></svg>
<div class="abs txt" style="left:162px;top:965.5px;font-size:17.5px;color:#111;white-space:nowrap">Add deprecation warnings to v1 endpoints</div>
<div class="abs" style="left:799px;top:962px;width:98px;height:28px;border:1.5px solid #d9a514;border-radius:8px;box-sizing:border-box;background:#fdf6e3"></div>
<div class="abs txt" style="left:810px;top:966px;font-size:15px;color:#b7791f">In Progress</div>
<div class="abs txt" style="left:950px;top:966.5px;font-size:16px;font-weight:bold;color:#d97706">Medium</div>
<div class="abs mono" style="left:1202px;top:967px;font-size:15px;color:#374151">plans/v2-migration.md</div>
<div class="abs" style="left:60px;top:1036px;width:1848px;height:1px;background:#e5e7eb"></div>
<svg class="abs" style="left:71px;top:1005px" width="23" height="23" viewBox="0 0 23 23"><rect x="1.2" y="1.2" width="20.6" height="20.6" rx="2" stroke="#2563eb" stroke-width="2.4" fill="#fff"/><path d="M5.5 11.5l4 4 7.5-8" stroke="#2563eb" stroke-width="2.2" fill="none"/></svg>
<div class="abs txt" style="left:162px;top:1006.5px;font-size:17.5px;color:#111;white-space:nowrap">Update API rate limiting docs</div>
<div class="abs" style="left:800px;top:1003px;width:60px;height:28px;border:1.5px solid #374151;border-radius:9px;box-sizing:border-box"></div>
<div class="abs txt" style="left:810px;top:1007px;font-size:15px;color:#374151">To Do</div>
<div class="abs txt" style="left:950px;top:1007.5px;font-size:16px;font-weight:bold;color:#d97706">Medium</div>
<div class="abs mono" style="left:1202px;top:1008px;font-size:15px;color:#374151">nimbalyst-local/tracker/tasks.md</div>
<div class="abs" style="left:60px;top:1077px;width:1848px;height:1px;background:#e5e7eb"></div>
<svg class="abs" style="left:71px;top:1046px" width="23" height="23" viewBox="0 0 23 23"><rect x="1.2" y="1.2" width="20.6" height="20.6" rx="2" stroke="#2563eb" stroke-width="2.4" fill="#fff"/><path d="M5.5 11.5l4 4 7.5-8" stroke="#2563eb" stroke-width="2.2" fill="none"/></svg>
<div class="abs txt" style="left:162px;top:1047.5px;font-size:17.5px;color:#111;white-space:nowrap">Migrate user sessions to Redis</div>
<div class="abs" style="left:800px;top:1044px;width:60px;height:28px;border:1.5px solid #374151;border-radius:9px;box-sizing:border-box"></div>
<div class="abs txt" style="left:810px;top:1048px;font-size:15px;color:#374151">To Do</div>
<div class="abs txt" style="left:950px;top:1048.5px;font-size:16px;font-weight:bold;color:#dc2626">High</div>
<div class="abs mono" style="left:1202px;top:1049px;font-size:15px;color:#374151">nimbalyst-local/tracker/tasks.md</div>
<div class="abs" style="left:0;top:0;width:1920px;height:1080px;background:rgba(0,0,0,0.45)"></div>
<div class="abs" style="left:210px;top:108px;width:1500px;height:864px;background:#fff;border-radius:13px;overflow:hidden;box-shadow:0 22px 50px -6px rgba(0,0,0,0.32)">
<div class="abs txt" style="left:21px;top:19px;font-size:20px;font-weight:bold;color:#111827">middleware.ts</div>
<div class="abs txt" style="left:21px;top:51px;font-size:14.9px;color:#6b7280;white-space:nowrap">/var/folders/nq/100p8zcn3xg7h7kgk65ksp880000gn/T/nimbalyst-marketing-DNYdsa/src/auth/middleware.ts</div>
<div class="abs" style="left:1311px;top:24px;width:117px;height:36px;border:1px solid #e5e7eb;border-radius:7px;box-sizing:border-box;background:#f9fafb"></div>

<div class="abs txt" style="left:1387px;top:34px;font-size:14.5px;color:#4b5563">Full</div>
<svg class="abs" style="left:1451px;top:33px" width="22" height="22" viewBox="0 0 22 22"><path d="M2.8 2.6l16.4 16.4M19.2 2.6L2.8 19" stroke="#4b5563" stroke-width="2.3" stroke-linecap="round"/></svg>
<div class="abs" style="left:0;top:84px;width:1500px;height:1px;background:#e5e7eb"></div>
<div class="abs" style="left:0;top:85px;width:438px;height:778px;background:#fff;border-right:1px solid #e5e7eb"></div>
<div class="abs" style="left:0;top:85px;width:438px;height:40px;background:#f9fafb;border-bottom:1px solid #e5e7eb"></div>
<div class="abs txt" style="left:16px;top:96px;font-size:15px;font-weight:bold;color:#6b7280;letter-spacing:0.9px">SNAPSHOTS (1)</div>
<div class="abs" style="left:6px;top:131px;width:427px;height:45px;border-radius:6px;background:#3b82f6"></div>
<svg class="abs" style="left:17px;top:141px" width="28" height="26" viewBox="0 0 28 26"><circle cx="13.5" cy="13" r="11.3" stroke="#fff" stroke-width="2.2" fill="none"/><path d="M11 7.5l2.5 6 3.5 3.5" stroke="#fff" stroke-width="2.2" fill="none" stroke-linecap="round"/></svg>
<div class="abs txt" style="left:56px;top:146px;font-size:15.5px;color:#fff;-webkit-text-stroke:0.25px #fff">Auto</div>
<div class="abs txt" style="left:339px;top:145px;font-size:14.5px;color:#e3ecfd">Just now</div>
<svg class="abs" style="left:398px;top:140px" width="24" height="28" viewBox="0 0 24 28"><path d="M2.5 5.5h19" stroke="#c9d9fc" stroke-width="2.6" stroke-linecap="round"/><path d="M9 4.2h6" stroke="#c9d9fc" stroke-width="2.4" stroke-linecap="round"/><path d="M5 7l1.2 17.5h11.6L19 7" stroke="#c9d9fc" stroke-width="2.6" fill="none" stroke-linejoin="round"/><path d="M10.2 10.5v10M13.8 10.5v10" stroke="#c9d9fc" stroke-width="2.6"/></svg>
<div class="abs" style="left:439px;top:85px;width:1061px;height:60px;background:#f9fafb;border-bottom:1px solid #e5e7eb"></div>
<div class="abs txt" style="left:454px;top:107.5px;font-size:15.6px;font-weight:bold;color:#6b7280;letter-spacing:0.15px">PREVIEW</div>
<div class="abs" style="left:1285px;top:95px;width:199px;height:40px;border-radius:7px;background:#3b82f6"></div>
<div class="abs txt" style="left:1305px;top:106px;font-size:17px;color:#fff;-webkit-text-stroke:0.1px #fff">Restore This Version</div>
<div class="abs" style="left:439px;top:146px;width:1061px;height:717px;background:#fff;overflow:hidden">
<div class="abs" style="left:85px;top:0;width:873px;height:26px;border-top:1px solid #eeeeee;border-bottom:1px solid #eeeeee;box-sizing:border-box"></div>
<div class="abs" style="left:85px;top:0;width:63px;height:79px;background:#d9d9d9"></div>
<div class="abs" style="left:85.0px;top:183.8px;width:1px;height:52.5px;background:#d3d3d3"></div>
<div class="abs" style="left:85.0px;top:315.0px;width:1px;height:78.8px;background:#d3d3d3"></div>
<div class="abs" style="left:85.0px;top:472.5px;width:1px;height:472.5px;background:#d3d3d3"></div>
<div class="abs" style="left:85.0px;top:1023.8px;width:1px;height:393.8px;background:#d3d3d3"></div>
<div class="abs" style="left:85.0px;top:1548.8px;width:1px;height:78.8px;background:#d3d3d3"></div>
<div class="abs" style="left:85.0px;top:1653.8px;width:1px;height:341.2px;background:#d3d3d3"></div>
<div class="abs" style="left:85.0px;top:2073.8px;width:1px;height:26.2px;background:#d3d3d3"></div>
<div class="abs" style="left:85.0px;top:2126.2px;width:1px;height:236.2px;background:#d3d3d3"></div>
<div class="abs" style="left:106.0px;top:525.0px;width:1px;height:393.8px;background:#d3d3d3"></div>
<div class="abs" style="left:106.0px;top:1076.2px;width:1px;height:315.0px;background:#d3d3d3"></div>
<div class="abs" style="left:106.0px;top:1680.0px;width:1px;height:157.5px;background:#d3d3d3"></div>
<div class="abs" style="left:106.0px;top:1916.2px;width:1px;height:52.5px;background:#d3d3d3"></div>
<div class="abs" style="left:106.0px;top:2257.5px;width:1px;height:78.8px;background:#d3d3d3"></div>
<div class="abs" style="left:127.0px;top:577.5px;width:1px;height:26.2px;background:#d3d3d3"></div>
<div class="abs" style="left:127.0px;top:708.8px;width:1px;height:131.2px;background:#d3d3d3"></div>
<div class="abs" style="left:127.0px;top:866.2px;width:1px;height:26.2px;background:#d3d3d3"></div>
<div class="abs" style="left:127.0px;top:1128.8px;width:1px;height:26.2px;background:#d3d3d3"></div>
<div class="abs" style="left:127.0px;top:1286.2px;width:1px;height:26.2px;background:#d3d3d3"></div>
<div class="abs" style="left:127.0px;top:1732.5px;width:1px;height:78.8px;background:#d3d3d3"></div>
<div class="abs" style="left:148.0px;top:761.2px;width:1px;height:52.5px;background:#d3d3d3"></div>
<div class="abs" style="left:85px;top:0;width:2px;height:26px;background:#000"></div>
<div class="abs mono ln" style="top:2.00px">1</div>
<div class="abs mono cl" style="left:85px;top:2.00px"><span style="color:#1f14c4">import</span> <span style="color:#0431fa">{</span> <span style="color:#267f7f">Request</span>, <span style="color:#267f7f">Response</span>, <span style="color:#267f7f">NextFunction</span> <span style="color:#0431fa">}</span> <span style="color:#1f14c4">from</span> <span style="color:#a31515">'express'</span>;</div>
<div class="abs mono ln" style="top:28.25px">2</div>
<div class="abs mono cl" style="left:85px;top:28.25px"><span style="color:#1f14c4">import</span> jwt <span style="color:#1f14c4">from</span> <span style="color:#a31515">'jsonwebtoken'</span>;</div>
<div class="abs mono ln" style="top:54.50px">3</div>
<div class="abs mono cl" style="left:85px;top:54.50px"><span style="color:#1f14c4">import</span> <span style="color:#0431fa">{</span> createLogger <span style="color:#0431fa">}</span> <span style="color:#1f14c4">from</span> <span style="color:#a31515">'../utils/logger'</span>;</div>
<div class="abs mono ln" style="top:80.75px">4</div>
<div class="abs mono cl" style="left:85px;top:80.75px"></div>
<div class="abs mono ln" style="top:107.00px">5</div>
<div class="abs mono cl" style="left:85px;top:107.00px"><span style="color:#1f14c4">const</span> logger = createLogger<span style="color:#0431fa">(</span><span style="color:#a31515">'auth'</span><span style="color:#0431fa">)</span>;</div>
<div class="abs mono ln" style="top:133.25px">6</div>
<div class="abs mono cl" style="left:85px;top:133.25px"></div>
<div class="abs mono ln" style="top:159.50px">7</div>
<div class="abs mono cl" style="left:85px;top:159.50px"><span style="color:#1f14c4">interface</span> <span style="color:#267f7f">AuthStrategy</span> <span style="color:#0431fa">{</span></div>
<div class="abs mono ln" style="top:185.75px">8</div>
<div class="abs mono cl" style="left:85px;top:185.75px">  name: <span style="color:#1f14c4">string</span>;</div>
<div class="abs mono ln" style="top:212.00px">9</div>
<div class="abs mono cl" style="left:85px;top:212.00px">  authenticate<span style="color:#319331">(</span>req: <span style="color:#267f7f">Request</span><span style="color:#319331">)</span>: <span style="color:#267f7f">Promise</span>&lt;<span style="color:#267f7f">AuthResult</span>&gt;;</div>
<div class="abs mono ln" style="top:238.25px">10</div>
<div class="abs mono cl" style="left:85px;top:238.25px"><span style="color:#0431fa">}</span></div>
<div class="abs mono ln" style="top:264.50px">11</div>
<div class="abs mono cl" style="left:85px;top:264.50px"></div>
<div class="abs mono ln" style="top:290.75px">12</div>
<div class="abs mono cl" style="left:85px;top:290.75px"><span style="color:#1f14c4">interface</span> <span style="color:#267f7f">AuthResult</span> <span style="color:#0431fa">{</span></div>
<div class="abs mono ln" style="top:317.00px">13</div>
<div class="abs mono cl" style="left:85px;top:317.00px">  success: <span style="color:#1f14c4">boolean</span>;</div>
<div class="abs mono ln" style="top:343.25px">14</div>
<div class="abs mono cl" style="left:85px;top:343.25px">  user?: <span style="color:#319331">{</span> id: <span style="color:#1f14c4">string</span>; email: <span style="color:#1f14c4">string</span>; role: <span style="color:#1f14c4">string</span> <span style="color:#319331">}</span>;</div>
<div class="abs mono ln" style="top:369.50px">15</div>
<div class="abs mono cl" style="left:85px;top:369.50px">  error?: <span style="color:#1f14c4">string</span>;</div>
<div class="abs mono ln" style="top:395.75px">16</div>
<div class="abs mono cl" style="left:85px;top:395.75px"><span style="color:#0431fa">}</span></div>
<div class="abs mono ln" style="top:422.00px">17</div>
<div class="abs mono cl" style="left:85px;top:422.00px"></div>
<div class="abs mono ln" style="top:448.25px">18</div>
<div class="abs mono cl" style="left:85px;top:448.25px"><span style="color:#1f14c4">const</span> jwtStrategy: <span style="color:#267f7f">AuthStrategy</span> = <span style="color:#0431fa">{</span></div>
<div class="abs mono ln" style="top:474.50px">19</div>
<div class="abs mono cl" style="left:85px;top:474.50px">  name: <span style="color:#a31515">'jwt'</span>,</div>
<div class="abs mono ln" style="top:500.75px">20</div>
<div class="abs mono cl" style="left:85px;top:500.75px">  <span style="color:#1f14c4">async</span> authenticate<span style="color:#319331">(</span>req<span style="color:#319331">)</span> <span style="color:#319331">{</span></div>
<div class="abs mono ln" style="top:527.00px">21</div>
<div class="abs mono cl" style="left:85px;top:527.00px">    <span style="color:#1f14c4">const</span> header = req.headers.authorization ?? req.headers<span style="color:#7b3814">[</span><span style="color:#a31515">'x-auth-token'</span><span style="color:#7b3814">]</span>;</div>
<div class="abs mono ln" style="top:553.25px">22</div>
<div class="abs mono cl" style="left:85px;top:553.25px">    <span style="color:#1f14c4">if</span> <span style="color:#7b3814">(</span>!header?.startsWith<span style="color:#0431fa">(</span><span style="color:#a31515">'Bearer '</span><span style="color:#0431fa">)</span><span style="color:#7b3814">)</span> <span style="color:#7b3814">{</span></div>
<div class="abs mono ln" style="top:579.50px">23</div>
<div class="abs mono cl" style="left:85px;top:579.50px">      <span style="color:#1f14c4">return</span> <span style="color:#0431fa">{</span> success: <span style="color:#1f14c4">false</span>, error: <span style="color:#a31515">'No Bearer token'</span> <span style="color:#0431fa">}</span>;</div>
<div class="abs mono ln" style="top:605.75px">24</div>
<div class="abs mono cl" style="left:85px;top:605.75px">    <span style="color:#7b3814">}</span></div>
<div class="abs mono ln" style="top:632.00px">25</div>
<div class="abs mono cl" style="left:85px;top:632.00px"></div>
<div class="abs mono ln" style="top:658.25px">26</div>
<div class="abs mono cl" style="left:85px;top:658.25px">    <span style="color:#1f14c4">const</span> token = header.slice<span style="color:#7b3814">(</span><span style="color:#098658">7</span><span style="color:#7b3814">)</span>;</div>
<div class="abs mono ln" style="top:684.50px">27</div>
<div class="abs mono cl" style="left:85px;top:684.50px">    <span style="color:#1f14c4">try</span> <span style="color:#7b3814">{</span></div>
<div class="abs mono ln" style="top:710.75px">28</div>
<div class="abs mono cl" style="left:85px;top:710.75px">      <span style="color:#1f14c4">const</span> decoded = jwt.verify<span style="color:#0431fa">(</span>token, process.env.JWT_SECRET!<span style="color:#0431fa">)</span> <span style="color:#1f14c4">as</span> <span style="color:#1f14c4">any</span>;</div>
<div class="abs mono ln" style="top:737.00px">29</div>
<div class="abs mono cl" style="left:85px;top:737.00px">      <span style="color:#1f14c4">return</span> <span style="color:#0431fa">{</span></div>
<div class="abs" style="left:958px;top:0;width:83px;height:6px;background:#e2e2e2"></div>
<div class="abs" style="left:958px;top:0;width:6px;height:6px;background:#c6c6c6"></div>
<svg class="abs" style="left:958px;top:0" width="84" height="200" viewBox="0 0 84 200"><g fill-opacity="0.38"><rect x="7" y="0.0" width="1" height="2" fill="#0431fa"/><rect x="9" y="0.0" width="7" height="2" fill="#267f7f"/><rect x="16" y="0.0" width="1" height="2" fill="#000"/><rect x="18" y="0.0" width="8" height="2" fill="#267f7f"/><rect x="26" y="0.0" width="1" height="2" fill="#000"/><rect x="28" y="0.0" width="12" height="2" fill="#267f7f"/><rect x="41" y="0.0" width="1" height="2" fill="#0431fa"/><rect x="43" y="0.0" width="4" height="2" fill="#1f14c4"/><rect x="48" y="0.0" width="9" height="2" fill="#a31515"/><rect x="57" y="0.0" width="1" height="2" fill="#000"/><rect x="7" y="2.0" width="3" height="2" fill="#000"/><rect x="11" y="2.0" width="4" height="2" fill="#1f14c4"/><rect x="16" y="2.0" width="14" height="2" fill="#a31515"/><rect x="30" y="2.0" width="1" height="2" fill="#000"/><rect x="7" y="4.0" width="1" height="2" fill="#0431fa"/><rect x="9" y="4.0" width="12" height="2" fill="#000"/><rect x="22" y="4.0" width="1" height="2" fill="#0431fa"/><rect x="24" y="4.0" width="4" height="2" fill="#1f14c4"/><rect x="29" y="4.0" width="17" height="2" fill="#a31515"/><rect x="46" y="4.0" width="1" height="2" fill="#000"/><rect x="0" y="8.0" width="5" height="2" fill="#1f14c4"/><rect x="6" y="8.0" width="6" height="2" fill="#000"/><rect x="13" y="8.0" width="1" height="2" fill="#000"/><rect x="15" y="8.0" width="12" height="2" fill="#000"/><rect x="27" y="8.0" width="1" height="2" fill="#0431fa"/><rect x="28" y="8.0" width="6" height="2" fill="#a31515"/><rect x="34" y="8.0" width="1" height="2" fill="#0431fa"/><rect x="35" y="8.0" width="1" height="2" fill="#000"/><rect x="0" y="12.0" width="9" height="2" fill="#1f14c4"/><rect x="10" y="12.0" width="12" height="2" fill="#267f7f"/><rect x="23" y="12.0" width="1" height="2" fill="#0431fa"/><rect x="2" y="14.0" width="4" height="2" fill="#000"/><rect x="6" y="14.0" width="1" height="2" fill="#000"/><rect x="8" y="14.0" width="6" height="2" fill="#1f14c4"/><rect x="14" y="14.0" width="1" height="2" fill="#000"/><rect x="2" y="16.0" width="12" height="2" fill="#000"/><rect x="14" y="16.0" width="1" height="2" fill="#319331"/><rect x="15" y="16.0" width="3" height="2" fill="#000"/><rect x="18" y="16.0" width="1" height="2" fill="#000"/><rect x="20" y="16.0" width="7" height="2" fill="#267f7f"/><rect x="27" y="16.0" width="1" height="2" fill="#319331"/><rect x="28" y="16.0" width="1" height="2" fill="#000"/><rect x="30" y="16.0" width="7" height="2" fill="#267f7f"/><rect x="37" y="16.0" width="1" height="2" fill="#000"/><rect x="38" y="16.0" width="10" height="2" fill="#267f7f"/><rect x="48" y="16.0" width="1" height="2" fill="#000"/><rect x="49" y="16.0" width="1" height="2" fill="#000"/><rect x="0" y="18.0" width="1" height="2" fill="#0431fa"/><rect x="0" y="22.0" width="9" height="2" fill="#1f14c4"/><rect x="10" y="22.0" width="10" height="2" fill="#267f7f"/><rect x="21" y="22.0" width="1" height="2" fill="#0431fa"/><rect x="2" y="24.0" width="7" height="2" fill="#000"/><rect x="9" y="24.0" width="1" height="2" fill="#000"/><rect x="11" y="24.0" width="7" height="2" fill="#1f14c4"/><rect x="18" y="24.0" width="1" height="2" fill="#000"/><rect x="2" y="26.0" width="4" height="2" fill="#000"/><rect x="6" y="26.0" width="1" height="2" fill="#000"/><rect x="7" y="26.0" width="1" height="2" fill="#000"/><rect x="9" y="26.0" width="1" height="2" fill="#319331"/><rect x="11" y="26.0" width="2" height="2" fill="#000"/><rect x="13" y="26.0" width="1" height="2" fill="#000"/><rect x="15" y="26.0" width="6" height="2" fill="#1f14c4"/><rect x="21" y="26.0" width="1" height="2" fill="#000"/><rect x="23" y="26.0" width="5" height="2" fill="#000"/><rect x="28" y="26.0" width="1" height="2" fill="#000"/><rect x="30" y="26.0" width="6" height="2" fill="#1f14c4"/><rect x="36" y="26.0" width="1" height="2" fill="#000"/><rect x="38" y="26.0" width="4" height="2" fill="#000"/><rect x="42" y="26.0" width="1" height="2" fill="#000"/><rect x="44" y="26.0" width="6" height="2" fill="#1f14c4"/><rect x="51" y="26.0" width="1" height="2" fill="#319331"/><rect x="52" y="26.0" width="1" height="2" fill="#000"/><rect x="2" y="28.0" width="5" height="2" fill="#000"/><rect x="7" y="28.0" width="1" height="2" fill="#000"/><rect x="8" y="28.0" width="1" height="2" fill="#000"/><rect x="10" y="28.0" width="6" height="2" fill="#1f14c4"/><rect x="16" y="28.0" width="1" height="2" fill="#000"/><rect x="0" y="30.0" width="1" height="2" fill="#0431fa"/><rect x="0" y="34.0" width="5" height="2" fill="#1f14c4"/><rect x="6" y="34.0" width="11" height="2" fill="#000"/><rect x="17" y="34.0" width="1" height="2" fill="#000"/><rect x="19" y="34.0" width="12" height="2" fill="#267f7f"/><rect x="32" y="34.0" width="1" height="2" fill="#000"/><rect x="34" y="34.0" width="1" height="2" fill="#0431fa"/><rect x="2" y="36.0" width="4" height="2" fill="#000"/><rect x="6" y="36.0" width="1" height="2" fill="#000"/><rect x="8" y="36.0" width="5" height="2" fill="#a31515"/><rect x="13" y="36.0" width="1" height="2" fill="#000"/><rect x="2" y="38.0" width="5" height="2" fill="#1f14c4"/><rect x="8" y="38.0" width="12" height="2" fill="#000"/><rect x="20" y="38.0" width="1" height="2" fill="#319331"/><rect x="21" y="38.0" width="3" height="2" fill="#000"/><rect x="24" y="38.0" width="1" height="2" fill="#319331"/><rect x="26" y="38.0" width="1" height="2" fill="#319331"/><rect x="4" y="40.0" width="5" height="2" fill="#1f14c4"/><rect x="10" y="40.0" width="6" height="2" fill="#000"/><rect x="17" y="40.0" width="1" height="2" fill="#000"/><rect x="19" y="40.0" width="3" height="2" fill="#000"/><rect x="22" y="40.0" width="1" height="2" fill="#000"/><rect x="23" y="40.0" width="7" height="2" fill="#000"/><rect x="30" y="40.0" width="1" height="2" fill="#000"/><rect x="31" y="40.0" width="13" height="2" fill="#000"/><rect x="45" y="40.0" width="1" height="2" fill="#000"/><rect x="46" y="40.0" width="1" height="2" fill="#000"/><rect x="48" y="40.0" width="3" height="2" fill="#000"/><rect x="51" y="40.0" width="1" height="2" fill="#000"/><rect x="52" y="40.0" width="7" height="2" fill="#000"/><rect x="59" y="40.0" width="1" height="2" fill="#7b3814"/><rect x="60" y="40.0" width="14" height="2" fill="#a31515"/><rect x="74" y="40.0" width="1" height="2" fill="#7b3814"/><rect x="75" y="40.0" width="1" height="2" fill="#000"/><rect x="4" y="42.0" width="2" height="2" fill="#1f14c4"/><rect x="7" y="42.0" width="1" height="2" fill="#7b3814"/><rect x="8" y="42.0" width="1" height="2" fill="#000"/><rect x="9" y="42.0" width="6" height="2" fill="#000"/><rect x="15" y="42.0" width="1" height="2" fill="#000"/><rect x="16" y="42.0" width="1" height="2" fill="#000"/><rect x="17" y="42.0" width="10" height="2" fill="#000"/><rect x="27" y="42.0" width="1" height="2" fill="#0431fa"/><rect x="28" y="42.0" width="7" height="2" fill="#a31515"/><rect x="36" y="42.0" width="1" height="2" fill="#a31515"/><rect x="37" y="42.0" width="1" height="2" fill="#0431fa"/><rect x="38" y="42.0" width="1" height="2" fill="#7b3814"/><rect x="40" y="42.0" width="1" height="2" fill="#7b3814"/><rect x="6" y="44.0" width="6" height="2" fill="#1f14c4"/><rect x="13" y="44.0" width="1" height="2" fill="#0431fa"/><rect x="15" y="44.0" width="7" height="2" fill="#000"/><rect x="22" y="44.0" width="1" height="2" fill="#000"/><rect x="24" y="44.0" width="5" height="2" fill="#1f14c4"/><rect x="29" y="44.0" width="1" height="2" fill="#000"/><rect x="31" y="44.0" width="5" height="2" fill="#000"/><rect x="36" y="44.0" width="1" height="2" fill="#000"/><rect x="38" y="44.0" width="3" height="2" fill="#a31515"/><rect x="42" y="44.0" width="6" height="2" fill="#a31515"/><rect x="49" y="44.0" width="6" height="2" fill="#a31515"/><rect x="56" y="44.0" width="1" height="2" fill="#0431fa"/><rect x="57" y="44.0" width="1" height="2" fill="#000"/><rect x="4" y="46.0" width="1" height="2" fill="#7b3814"/><rect x="4" y="50.0" width="5" height="2" fill="#1f14c4"/><rect x="10" y="50.0" width="5" height="2" fill="#000"/><rect x="16" y="50.0" width="1" height="2" fill="#000"/><rect x="18" y="50.0" width="6" height="2" fill="#000"/><rect x="24" y="50.0" width="1" height="2" fill="#000"/><rect x="25" y="50.0" width="5" height="2" fill="#000"/><rect x="30" y="50.0" width="1" height="2" fill="#7b3814"/><rect x="31" y="50.0" width="1" height="2" fill="#098658"/><rect x="32" y="50.0" width="1" height="2" fill="#7b3814"/><rect x="33" y="50.0" width="1" height="2" fill="#000"/><rect x="4" y="52.0" width="3" height="2" fill="#1f14c4"/><rect x="8" y="52.0" width="1" height="2" fill="#7b3814"/><rect x="6" y="54.0" width="5" height="2" fill="#1f14c4"/><rect x="12" y="54.0" width="7" height="2" fill="#000"/><rect x="20" y="54.0" width="1" height="2" fill="#000"/><rect x="22" y="54.0" width="3" height="2" fill="#000"/><rect x="25" y="54.0" width="1" height="2" fill="#000"/><rect x="26" y="54.0" width="6" height="2" fill="#000"/><rect x="32" y="54.0" width="1" height="2" fill="#0431fa"/><rect x="33" y="54.0" width="5" height="2" fill="#000"/><rect x="38" y="54.0" width="1" height="2" fill="#000"/><rect x="40" y="54.0" width="7" height="2" fill="#000"/><rect x="47" y="54.0" width="1" height="2" fill="#000"/><rect x="48" y="54.0" width="3" height="2" fill="#000"/><rect x="51" y="54.0" width="1" height="2" fill="#000"/><rect x="52" y="54.0" width="10" height="2" fill="#000"/><rect x="62" y="54.0" width="1" height="2" fill="#000"/><rect x="63" y="54.0" width="1" height="2" fill="#0431fa"/><rect x="65" y="54.0" width="2" height="2" fill="#1f14c4"/><rect x="68" y="54.0" width="3" height="2" fill="#1f14c4"/><rect x="71" y="54.0" width="1" height="2" fill="#000"/><rect x="6" y="56.0" width="6" height="2" fill="#1f14c4"/><rect x="13" y="56.0" width="1" height="2" fill="#0431fa"/><rect x="8" y="58.0" width="7" height="2" fill="#000"/><rect x="15" y="58.0" width="1" height="2" fill="#000"/><rect x="17" y="58.0" width="4" height="2" fill="#1f14c4"/><rect x="21" y="58.0" width="1" height="2" fill="#000"/><rect x="8" y="60.0" width="4" height="2" fill="#000"/><rect x="12" y="60.0" width="1" height="2" fill="#000"/><rect x="14" y="60.0" width="1" height="2" fill="#319331"/><rect x="16" y="60.0" width="2" height="2" fill="#000"/><rect x="18" y="60.0" width="1" height="2" fill="#000"/><rect x="20" y="60.0" width="7" height="2" fill="#000"/><rect x="27" y="60.0" width="1" height="2" fill="#000"/><rect x="28" y="60.0" width="3" height="2" fill="#000"/><rect x="31" y="60.0" width="1" height="2" fill="#000"/><rect x="33" y="60.0" width="5" height="2" fill="#000"/><rect x="38" y="60.0" width="1" height="2" fill="#000"/><rect x="40" y="60.0" width="7" height="2" fill="#000"/><rect x="47" y="60.0" width="1" height="2" fill="#000"/><rect x="48" y="60.0" width="5" height="2" fill="#000"/><rect x="53" y="60.0" width="1" height="2" fill="#000"/><rect x="55" y="60.0" width="4" height="2" fill="#000"/><rect x="59" y="60.0" width="1" height="2" fill="#000"/><rect x="61" y="60.0" width="7" height="2" fill="#000"/><rect x="68" y="60.0" width="1" height="2" fill="#000"/><rect x="69" y="60.0" width="4" height="2" fill="#000"/><rect x="74" y="60.0" width="1" height="2" fill="#319331"/><rect x="75" y="60.0" width="1" height="2" fill="#000"/><rect x="6" y="62.0" width="1" height="2" fill="#0431fa"/><rect x="7" y="62.0" width="1" height="2" fill="#000"/><rect x="4" y="64.0" width="1" height="2" fill="#7b3814"/><rect x="6" y="64.0" width="5" height="2" fill="#1f14c4"/><rect x="12" y="64.0" width="1" height="2" fill="#7b3814"/><rect x="6" y="66.0" width="6" height="2" fill="#1f14c4"/><rect x="13" y="66.0" width="1" height="2" fill="#0431fa"/><rect x="15" y="66.0" width="7" height="2" fill="#000"/><rect x="22" y="66.0" width="1" height="2" fill="#000"/><rect x="24" y="66.0" width="5" height="2" fill="#1f14c4"/><rect x="29" y="66.0" width="1" height="2" fill="#000"/><rect x="31" y="66.0" width="5" height="2" fill="#000"/><rect x="36" y="66.0" width="1" height="2" fill="#000"/><rect x="38" y="66.0" width="8" height="2" fill="#a31515"/><rect x="47" y="66.0" width="2" height="2" fill="#a31515"/><rect x="50" y="66.0" width="7" height="2" fill="#a31515"/><rect x="58" y="66.0" width="4" height="2" fill="#a31515"/><rect x="63" y="66.0" width="1" height="2" fill="#0431fa"/><rect x="64" y="66.0" width="1" height="2" fill="#000"/><rect x="4" y="68.0" width="1" height="2" fill="#7b3814"/><rect x="2" y="70.0" width="1" height="2" fill="#319331"/><rect x="3" y="70.0" width="1" height="2" fill="#000"/><rect x="0" y="72.0" width="1" height="2" fill="#0431fa"/><rect x="1" y="72.0" width="1" height="2" fill="#000"/><rect x="0" y="76.0" width="5" height="2" fill="#1f14c4"/><rect x="6" y="76.0" width="14" height="2" fill="#000"/><rect x="20" y="76.0" width="1" height="2" fill="#000"/><rect x="22" y="76.0" width="12" height="2" fill="#267f7f"/><rect x="35" y="76.0" width="1" height="2" fill="#000"/><rect x="37" y="76.0" width="1" height="2" fill="#0431fa"/><rect x="2" y="78.0" width="4" height="2" fill="#000"/><rect x="6" y="78.0" width="1" height="2" fill="#000"/><rect x="8" y="78.0" width="9" height="2" fill="#a31515"/><rect x="17" y="78.0" width="1" height="2" fill="#000"/><rect x="2" y="80.0" width="5" height="2" fill="#1f14c4"/><rect x="8" y="80.0" width="12" height="2" fill="#000"/><rect x="20" y="80.0" width="1" height="2" fill="#319331"/><rect x="21" y="80.0" width="3" height="2" fill="#000"/><rect x="24" y="80.0" width="1" height="2" fill="#319331"/><rect x="26" y="80.0" width="1" height="2" fill="#319331"/><rect x="4" y="82.0" width="5" height="2" fill="#1f14c4"/><rect x="10" y="82.0" width="3" height="2" fill="#000"/><rect x="14" y="82.0" width="1" height="2" fill="#000"/><rect x="16" y="82.0" width="3" height="2" fill="#000"/><rect x="19" y="82.0" width="1" height="2" fill="#000"/><rect x="20" y="82.0" width="7" height="2" fill="#000"/><rect x="27" y="82.0" width="1" height="2" fill="#7b3814"/><rect x="28" y="82.0" width="11" height="2" fill="#a31515"/><rect x="39" y="82.0" width="1" height="2" fill="#7b3814"/><rect x="41" y="82.0" width="2" height="2" fill="#1f14c4"/><rect x="44" y="82.0" width="6" height="2" fill="#1f14c4"/><rect x="50" y="82.0" width="1" height="2" fill="#000"/><rect x="4" y="84.0" width="2" height="2" fill="#1f14c4"/><rect x="7" y="84.0" width="1" height="2" fill="#7b3814"/><rect x="8" y="84.0" width="1" height="2" fill="#000"/><rect x="9" y="84.0" width="3" height="2" fill="#000"/><rect x="12" y="84.0" width="1" height="2" fill="#7b3814"/><rect x="14" y="84.0" width="1" height="2" fill="#7b3814"/><rect x="6" y="86.0" width="6" height="2" fill="#1f14c4"/><rect x="13" y="86.0" width="1" height="2" fill="#0431fa"/><rect x="15" y="86.0" width="7" height="2" fill="#000"/><rect x="22" y="86.0" width="1" height="2" fill="#000"/><rect x="24" y="86.0" width="5" height="2" fill="#1f14c4"/><rect x="29" y="86.0" width="1" height="2" fill="#000"/><rect x="31" y="86.0" width="5" height="2" fill="#000"/><rect x="36" y="86.0" width="1" height="2" fill="#000"/><rect x="38" y="86.0" width="3" height="2" fill="#a31515"/><rect x="42" y="86.0" width="3" height="2" fill="#a31515"/><rect x="46" y="86.0" width="3" height="2" fill="#a31515"/><rect x="50" y="86.0" width="9" height="2" fill="#a31515"/><rect x="60" y="86.0" width="1" height="2" fill="#0431fa"/><rect x="61" y="86.0" width="1" height="2" fill="#000"/><rect x="4" y="88.0" width="1" height="2" fill="#7b3814"/><rect x="4" y="92.0" width="2" height="2" fill="#008000"/><rect x="7" y="92.0" width="5" height="2" fill="#008000"/><rect x="13" y="92.0" width="8" height="2" fill="#008000"/><rect x="22" y="92.0" width="7" height="2" fill="#008000"/><rect x="30" y="92.0" width="8" height="2" fill="#008000"/><rect x="4" y="94.0" width="5" height="2" fill="#1f14c4"/><rect x="10" y="94.0" width="4" height="2" fill="#000"/><rect x="15" y="94.0" width="1" height="2" fill="#000"/><rect x="17" y="94.0" width="5" height="2" fill="#1f14c4"/><rect x="23" y="94.0" width="12" height="2" fill="#000"/><rect x="35" y="94.0" width="1" height="2" fill="#7b3814"/><rect x="36" y="94.0" width="3" height="2" fill="#000"/><rect x="39" y="94.0" width="1" height="2" fill="#7b3814"/><rect x="40" y="94.0" width="1" height="2" fill="#000"/><rect x="4" y="96.0" width="2" height="2" fill="#1f14c4"/><rect x="7" y="96.0" width="1" height="2" fill="#7b3814"/><rect x="8" y="96.0" width="1" height="2" fill="#000"/><rect x="9" y="96.0" width="4" height="2" fill="#000"/><rect x="13" y="96.0" width="1" height="2" fill="#7b3814"/><rect x="15" y="96.0" width="1" height="2" fill="#7b3814"/><rect x="6" y="98.0" width="6" height="2" fill="#1f14c4"/><rect x="13" y="98.0" width="1" height="2" fill="#0431fa"/><rect x="15" y="98.0" width="7" height="2" fill="#000"/><rect x="22" y="98.0" width="1" height="2" fill="#000"/><rect x="24" y="98.0" width="5" height="2" fill="#1f14c4"/><rect x="29" y="98.0" width="1" height="2" fill="#000"/><rect x="31" y="98.0" width="5" height="2" fill="#000"/><rect x="36" y="98.0" width="1" height="2" fill="#000"/><rect x="38" y="98.0" width="8" height="2" fill="#a31515"/><rect x="47" y="98.0" width="3" height="2" fill="#a31515"/><rect x="51" y="98.0" width="4" height="2" fill="#a31515"/><rect x="56" y="98.0" width="1" height="2" fill="#0431fa"/><rect x="57" y="98.0" width="1" height="2" fill="#000"/><rect x="4" y="100.0" width="1" height="2" fill="#7b3814"/><rect x="4" y="104.0" width="6" height="2" fill="#1f14c4"/><rect x="11" y="104.0" width="1" height="2" fill="#7b3814"/><rect x="13" y="104.0" width="7" height="2" fill="#000"/><rect x="20" y="104.0" width="1" height="2" fill="#000"/><rect x="22" y="104.0" width="4" height="2" fill="#1f14c4"/><rect x="26" y="104.0" width="1" height="2" fill="#000"/><rect x="28" y="104.0" width="4" height="2" fill="#000"/><rect x="33" y="104.0" width="1" height="2" fill="#7b3814"/><rect x="34" y="104.0" width="1" height="2" fill="#000"/><rect x="2" y="106.0" width="1" height="2" fill="#319331"/><rect x="3" y="106.0" width="1" height="2" fill="#000"/><rect x="0" y="108.0" width="1" height="2" fill="#0431fa"/><rect x="1" y="108.0" width="1" height="2" fill="#000"/><rect x="0" y="112.0" width="5" height="2" fill="#1f14c4"/><rect x="6" y="112.0" width="10" height="2" fill="#000"/><rect x="16" y="112.0" width="1" height="2" fill="#000"/><rect x="18" y="112.0" width="12" height="2" fill="#267f7f"/><rect x="30" y="112.0" width="1" height="2" fill="#0431fa"/><rect x="31" y="112.0" width="1" height="2" fill="#0431fa"/><rect x="33" y="112.0" width="1" height="2" fill="#000"/><rect x="35" y="112.0" width="1" height="2" fill="#0431fa"/><rect x="36" y="112.0" width="11" height="2" fill="#000"/><rect x="47" y="112.0" width="1" height="2" fill="#000"/><rect x="49" y="112.0" width="14" height="2" fill="#000"/><rect x="63" y="112.0" width="1" height="2" fill="#0431fa"/><rect x="64" y="112.0" width="1" height="2" fill="#000"/><rect x="0" y="116.0" width="6" height="2" fill="#1f14c4"/><rect x="7" y="116.0" width="5" height="2" fill="#1f14c4"/><rect x="13" y="116.0" width="8" height="2" fill="#1f14c4"/><rect x="22" y="116.0" width="14" height="2" fill="#000"/><rect x="36" y="116.0" width="1" height="2" fill="#0431fa"/><rect x="2" y="118.0" width="3" height="2" fill="#000"/><rect x="5" y="118.0" width="1" height="2" fill="#000"/><rect x="7" y="118.0" width="7" height="2" fill="#267f7f"/><rect x="14" y="118.0" width="1" height="2" fill="#000"/><rect x="2" y="120.0" width="3" height="2" fill="#000"/><rect x="5" y="120.0" width="1" height="2" fill="#000"/><rect x="7" y="120.0" width="8" height="2" fill="#267f7f"/><rect x="15" y="120.0" width="1" height="2" fill="#000"/><rect x="2" y="122.0" width="4" height="2" fill="#000"/><rect x="6" y="122.0" width="1" height="2" fill="#000"/><rect x="8" y="122.0" width="12" height="2" fill="#267f7f"/><rect x="0" y="124.0" width="1" height="2" fill="#0431fa"/><rect x="2" y="124.0" width="1" height="2" fill="#0431fa"/><rect x="2" y="126.0" width="3" height="2" fill="#1f14c4"/><rect x="6" y="126.0" width="1" height="2" fill="#319331"/><rect x="7" y="126.0" width="5" height="2" fill="#1f14c4"/><rect x="13" y="126.0" width="8" height="2" fill="#000"/><rect x="22" y="126.0" width="2" height="2" fill="#1f14c4"/><rect x="25" y="126.0" width="10" height="2" fill="#000"/><rect x="35" y="126.0" width="1" height="2" fill="#319331"/><rect x="37" y="126.0" width="1" height="2" fill="#319331"/><rect x="4" y="128.0" width="5" height="2" fill="#1f14c4"/><rect x="10" y="128.0" width="6" height="2" fill="#000"/><rect x="17" y="128.0" width="1" height="2" fill="#000"/><rect x="19" y="128.0" width="5" height="2" fill="#1f14c4"/><rect x="25" y="128.0" width="8" height="2" fill="#000"/><rect x="33" y="128.0" width="1" height="2" fill="#000"/><rect x="34" y="128.0" width="12" height="2" fill="#000"/><rect x="46" y="128.0" width="1" height="2" fill="#7b3814"/><rect x="47" y="128.0" width="3" height="2" fill="#000"/><rect x="50" y="128.0" width="1" height="2" fill="#7b3814"/><rect x="51" y="128.0" width="1" height="2" fill="#000"/><rect x="4" y="130.0" width="2" height="2" fill="#1f14c4"/><rect x="7" y="130.0" width="1" height="2" fill="#7b3814"/><rect x="8" y="130.0" width="6" height="2" fill="#000"/><rect x="14" y="130.0" width="1" height="2" fill="#000"/><rect x="15" y="130.0" width="7" height="2" fill="#000"/><rect x="23" y="130.0" width="1" height="2" fill="#000"/><rect x="24" y="130.0" width="1" height="2" fill="#000"/><rect x="26" y="130.0" width="6" height="2" fill="#000"/><rect x="32" y="130.0" width="1" height="2" fill="#000"/><rect x="33" y="130.0" width="4" height="2" fill="#000"/><rect x="37" y="130.0" width="1" height="2" fill="#7b3814"/><rect x="39" y="130.0" width="1" height="2" fill="#7b3814"/><rect x="6" y="132.0" width="3" height="2" fill="#000"/><rect x="9" y="132.0" width="1" height="2" fill="#000"/><rect x="10" y="132.0" width="4" height="2" fill="#000"/><rect x="15" y="132.0" width="1" height="2" fill="#000"/><rect x="17" y="132.0" width="6" height="2" fill="#000"/><rect x="23" y="132.0" width="1" height="2" fill="#000"/><rect x="24" y="132.0" width="4" height="2" fill="#000"/><rect x="28" y="132.0" width="1" height="2" fill="#000"/><rect x="6" y="134.0" width="6" height="2" fill="#000"/><rect x="12" y="134.0" width="1" height="2" fill="#000"/><rect x="13" y="134.0" width="4" height="2" fill="#000"/><rect x="17" y="134.0" width="1" height="2" fill="#0431fa"/><rect x="18" y="134.0" width="14" height="2" fill="#a31515"/><rect x="33" y="134.0" width="3" height="2" fill="#a31515"/><rect x="37" y="134.0" width="1" height="2" fill="#a31515"/><rect x="39" y="134.0" width="1" height="2" fill="#000"/><rect x="41" y="134.0" width="8" height="2" fill="#000"/><rect x="49" y="134.0" width="1" height="2" fill="#000"/><rect x="50" y="134.0" width="4" height="2" fill="#000"/><rect x="54" y="134.0" width="1" height="2" fill="#000"/><rect x="56" y="134.0" width="1" height="2" fill="#319331"/><rect x="58" y="134.0" width="6" height="2" fill="#000"/><rect x="64" y="134.0" width="1" height="2" fill="#000"/><rect x="66" y="134.0" width="6" height="2" fill="#000"/><rect x="72" y="134.0" width="1" height="2" fill="#000"/><rect x="73" y="134.0" width="4" height="2" fill="#000"/><rect x="77" y="134.0" width="1" height="2" fill="#000"/><rect x="78" y="134.0" width="2" height="2" fill="#000"/><rect x="81" y="134.0" width="1" height="2" fill="#319331"/><rect x="82" y="134.0" width="1" height="2" fill="#0431fa"/><rect x="83" y="134.0" width="1" height="2" fill="#000"/><rect x="6" y="136.0" width="6" height="2" fill="#1f14c4"/><rect x="13" y="136.0" width="4" height="2" fill="#000"/><rect x="17" y="136.0" width="1" height="2" fill="#0431fa"/><rect x="18" y="136.0" width="1" height="2" fill="#0431fa"/><rect x="19" y="136.0" width="1" height="2" fill="#000"/><rect x="4" y="138.0" width="1" height="2" fill="#7b3814"/><rect x="2" y="140.0" width="1" height="2" fill="#319331"/><rect x="2" y="144.0" width="3" height="2" fill="#000"/><rect x="5" y="144.0" width="1" height="2" fill="#000"/><rect x="6" y="144.0" width="6" height="2" fill="#000"/><rect x="12" y="144.0" width="1" height="2" fill="#319331"/><rect x="13" y="144.0" width="3" height="2" fill="#098658"/><rect x="16" y="144.0" width="1" height="2" fill="#319331"/><rect x="17" y="144.0" width="1" height="2" fill="#000"/><rect x="18" y="144.0" width="4" height="2" fill="#000"/><rect x="22" y="144.0" width="1" height="2" fill="#319331"/><rect x="23" y="144.0" width="1" height="2" fill="#7b3814"/><rect x="4" y="146.0" width="5" height="2" fill="#000"/><rect x="9" y="146.0" width="1" height="2" fill="#000"/><rect x="11" y="146.0" width="14" height="2" fill="#a31515"/><rect x="25" y="146.0" width="1" height="2" fill="#000"/><rect x="4" y="148.0" width="7" height="2" fill="#000"/><rect x="11" y="148.0" width="1" height="2" fill="#000"/><rect x="13" y="148.0" width="6" height="2" fill="#a31515"/><rect x="20" y="148.0" width="3" height="2" fill="#a31515"/><rect x="24" y="148.0" width="5" height="2" fill="#a31515"/><rect x="30" y="148.0" width="2" height="2" fill="#a31515"/><rect x="33" y="148.0" width="3" height="2" fill="#a31515"/><rect x="37" y="148.0" width="3" height="2" fill="#a31515"/><rect x="41" y="148.0" width="9" height="2" fill="#a31515"/><rect x="50" y="148.0" width="1" height="2" fill="#000"/><rect x="2" y="150.0" width="1" height="2" fill="#7b3814"/><rect x="3" y="150.0" width="1" height="2" fill="#319331"/><rect x="4" y="150.0" width="1" height="2" fill="#000"/><rect x="0" y="152.0" width="1" height="2" fill="#0431fa"/><rect x="0" y="156.0" width="6" height="2" fill="#1f14c4"/><rect x="7" y="156.0" width="8" height="2" fill="#1f14c4"/><rect x="16" y="156.0" width="12" height="2" fill="#000"/><rect x="28" y="156.0" width="1" height="2" fill="#0431fa"/><rect x="2" y="158.0" width="3" height="2" fill="#000"/><rect x="5" y="158.0" width="1" height="2" fill="#000"/><rect x="7" y="158.0" width="6" height="2" fill="#1f14c4"/><rect x="0" y="160.0" width="1" height="2" fill="#0431fa"/><rect x="1" y="160.0" width="1" height="2" fill="#000"/><rect x="3" y="160.0" width="7" height="2" fill="#267f7f"/><rect x="10" y="160.0" width="1" height="2" fill="#000"/><rect x="11" y="160.0" width="1" height="2" fill="#0431fa"/><rect x="13" y="160.0" width="2" height="2" fill="#000"/><rect x="15" y="160.0" width="1" height="2" fill="#000"/><rect x="17" y="160.0" width="6" height="2" fill="#1f14c4"/><rect x="23" y="160.0" width="1" height="2" fill="#000"/><rect x="25" y="160.0" width="5" height="2" fill="#000"/><rect x="30" y="160.0" width="1" height="2" fill="#000"/><rect x="32" y="160.0" width="6" height="2" fill="#1f14c4"/><rect x="38" y="160.0" width="1" height="2" fill="#000"/><rect x="40" y="160.0" width="4" height="2" fill="#000"/><rect x="44" y="160.0" width="1" height="2" fill="#000"/><rect x="46" y="160.0" width="6" height="2" fill="#1f14c4"/><rect x="53" y="160.0" width="1" height="2" fill="#0431fa"/><rect x="55" y="160.0" width="1" height="2" fill="#000"/><rect x="57" y="160.0" width="4" height="2" fill="#1f14c4"/><rect x="61" y="160.0" width="1" height="2" fill="#000"/><rect x="63" y="160.0" width="1" height="2" fill="#0431fa"/><rect x="2" y="162.0" width="2" height="2" fill="#008000"/><rect x="5" y="162.0" width="5" height="2" fill="#008000"/><rect x="11" y="162.0" width="4" height="2" fill="#008000"/><rect x="16" y="162.0" width="3" height="2" fill="#008000"/><rect x="20" y="162.0" width="3" height="2" fill="#008000"/><rect x="24" y="162.0" width="6" height="2" fill="#008000"/><rect x="31" y="162.0" width="6" height="2" fill="#008000"/><rect x="2" y="164.0" width="5" height="2" fill="#1f14c4"/><rect x="8" y="164.0" width="3" height="2" fill="#000"/><rect x="12" y="164.0" width="1" height="2" fill="#000"/><rect x="14" y="164.0" width="5" height="2" fill="#1f14c4"/><rect x="20" y="164.0" width="2" height="2" fill="#000"/><rect x="22" y="164.0" width="1" height="2" fill="#000"/><rect x="23" y="164.0" width="5" height="2" fill="#000"/><rect x="28" y="164.0" width="1" height="2" fill="#319331"/><rect x="29" y="164.0" width="7" height="2" fill="#a31515"/><rect x="37" y="164.0" width="1" height="2" fill="#a31515"/><rect x="39" y="164.0" width="4" height="2" fill="#a31515"/><rect x="44" y="164.0" width="8" height="2" fill="#a31515"/><rect x="53" y="164.0" width="5" height="2" fill="#a31515"/><rect x="59" y="164.0" width="3" height="2" fill="#a31515"/><rect x="63" y="164.0" width="1" height="2" fill="#a31515"/><rect x="65" y="164.0" width="2" height="2" fill="#a31515"/><rect x="68" y="164.0" width="3" height="2" fill="#a31515"/><rect x="72" y="164.0" width="7" height="2" fill="#a31515"/><rect x="80" y="164.0" width="1" height="2" fill="#a31515"/><rect x="82" y="164.0" width="6" height="2" fill="#a31515"/><rect x="88" y="164.0" width="1" height="2" fill="#000"/><rect x="90" y="164.0" width="1" height="2" fill="#7b3814"/><rect x="91" y="164.0" width="3" height="2" fill="#000"/><rect x="94" y="164.0" width="1" height="2" fill="#7b3814"/><rect x="95" y="164.0" width="1" height="2" fill="#319331"/><rect x="96" y="164.0" width="1" height="2" fill="#000"/><rect x="2" y="166.0" width="2" height="2" fill="#1f14c4"/><rect x="5" y="166.0" width="1" height="2" fill="#319331"/><rect x="6" y="166.0" width="1" height="2" fill="#000"/><rect x="7" y="166.0" width="3" height="2" fill="#000"/><rect x="10" y="166.0" width="1" height="2" fill="#319331"/><rect x="12" y="166.0" width="6" height="2" fill="#1f14c4"/><rect x="19" y="166.0" width="4" height="2" fill="#1f14c4"/><rect x="23" y="166.0" width="1" height="2" fill="#000"/><rect x="2" y="170.0" width="6" height="2" fill="#1f14c4"/><rect x="9" y="170.0" width="1" height="2" fill="#319331"/><rect x="4" y="172.0" width="2" height="2" fill="#000"/><rect x="6" y="172.0" width="1" height="2" fill="#000"/><rect x="8" y="172.0" width="3" height="2" fill="#000"/><rect x="11" y="172.0" width="1" height="2" fill="#000"/><rect x="12" y="172.0" width="7" height="2" fill="#000"/><rect x="19" y="172.0" width="1" height="2" fill="#000"/><rect x="4" y="174.0" width="5" height="2" fill="#000"/><rect x="9" y="174.0" width="1" height="2" fill="#000"/><rect x="11" y="174.0" width="3" height="2" fill="#000"/><rect x="14" y="174.0" width="1" height="2" fill="#000"/><rect x="15" y="174.0" width="5" height="2" fill="#000"/><rect x="20" y="174.0" width="1" height="2" fill="#000"/><rect x="4" y="176.0" width="4" height="2" fill="#000"/><rect x="8" y="176.0" width="1" height="2" fill="#000"/><rect x="10" y="176.0" width="3" height="2" fill="#000"/><rect x="13" y="176.0" width="1" height="2" fill="#000"/><rect x="14" y="176.0" width="4" height="2" fill="#000"/><rect x="18" y="176.0" width="1" height="2" fill="#000"/><rect x="2" y="178.0" width="1" height="2" fill="#319331"/><rect x="3" y="178.0" width="1" height="2" fill="#000"/><rect x="0" y="180.0" width="1" height="2" fill="#0431fa"/></g></svg>
<div class="abs" style="left:1042px;top:0;width:1px;height:717px;background:#ececec"></div>
<div class="abs" style="left:1043px;top:2px;width:8px;height:21px;background:#c1c1c1"></div>
<div class="abs" style="left:1043px;top:0;width:18px;height:2px;background:#333"></div>
<div class="abs" style="left:1043px;top:633px;width:8px;height:7px;background:#b3b3b3"></div>
</div>
</div>
</body></html>
